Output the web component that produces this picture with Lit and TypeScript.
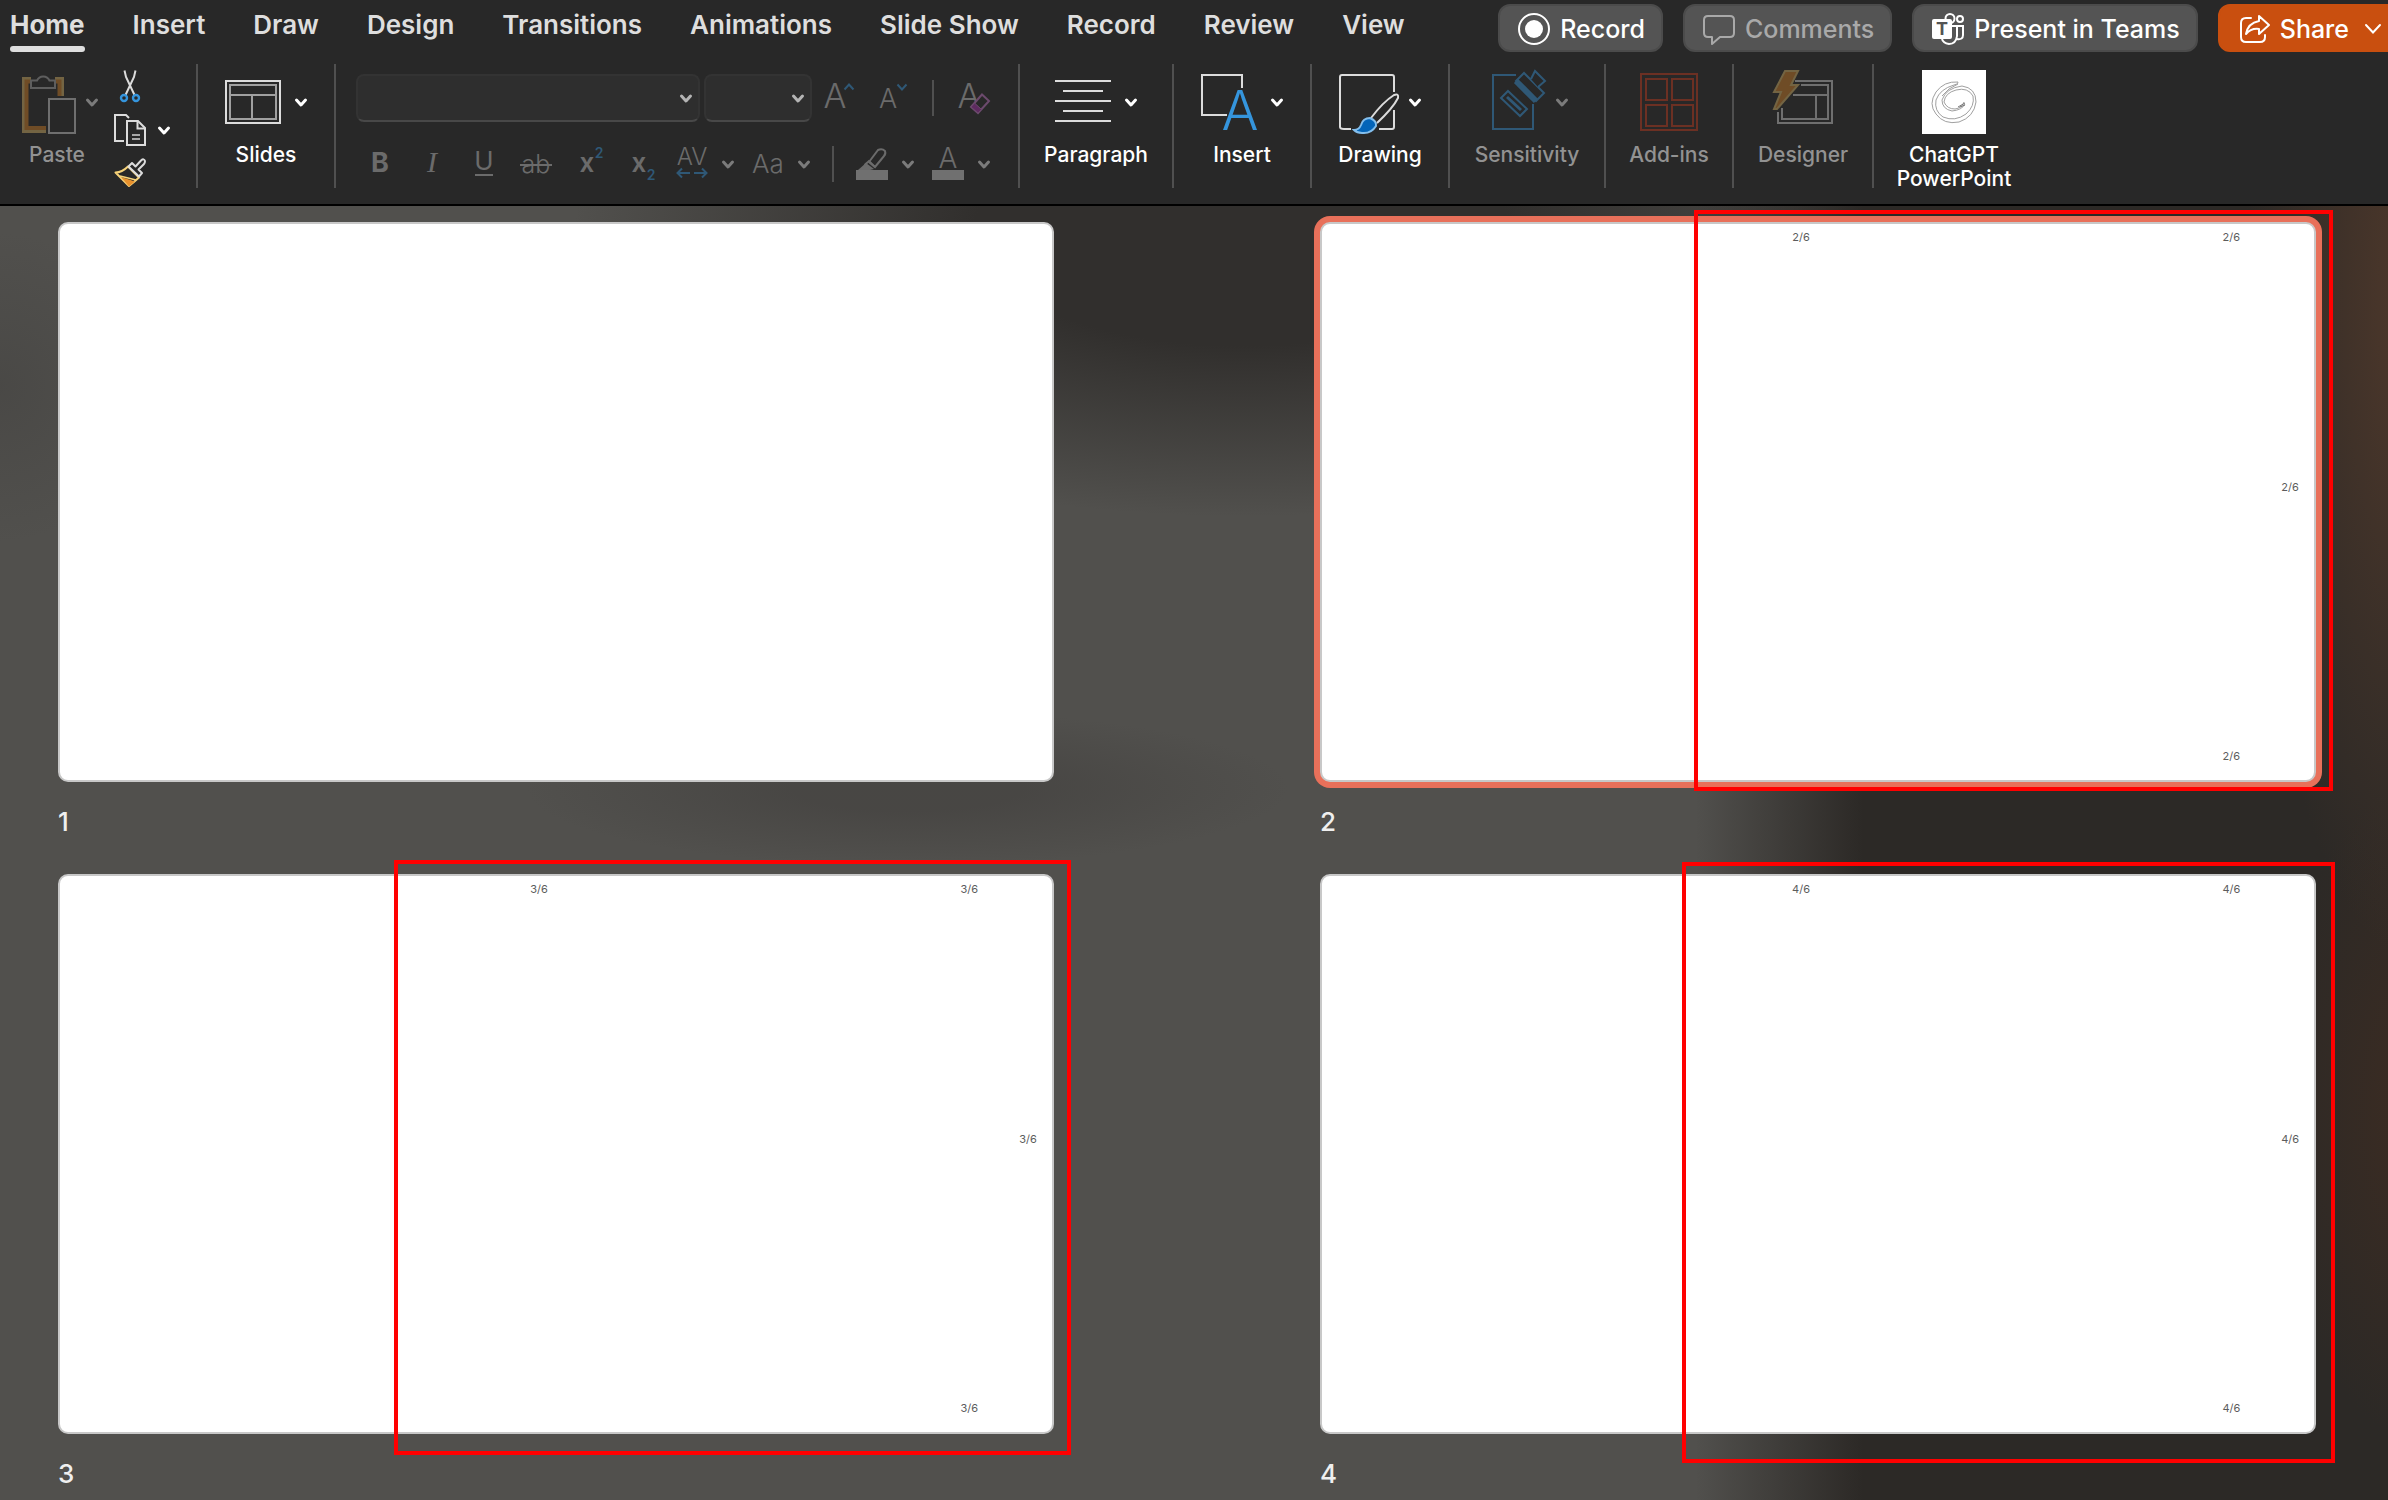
import { LitElement, html, css, svg, nothing, type TemplateResult } from "lit";
import { customElement, property, state } from "lit/decorators.js";
import { classMap } from "lit/directives/class-map.js";
import { styleMap } from "lit/directives/style-map.js";

const chevron = html`<svg class="chevron" viewBox="0 0 12 10" width="12" height="10" aria-hidden="true">
  <path d="M1.5 3 6 8 10.5 3" fill="none" stroke="currentColor" stroke-width="3" stroke-linecap="round" stroke-linejoin="round" />
</svg>`;

const icon = (w: number, h: number, body: TemplateResult) =>
  html`<svg class="icon" viewBox="0 0 ${w} ${h}" width=${w} height=${h} aria-hidden="true">${body}</svg>`;

const icons = {
  paste: icon(56, 64, svg`
    <path d="M15 10H9V60H30M39 10H45V30" fill="none" stroke="#736443" stroke-width="6" />
    <path d="M15 11.500H10.500V58H30M39 11.500H43.500V30" fill="none" stroke="#6f4c26" stroke-width="4" />
    <path d="M15 18V10.500H21A6.800 6.800 0 0 1 33.500 10.500H39V18Z" fill="#282828" stroke="#5e5e5e" stroke-width="2" />
    <rect x="30" y="26" width="32" height="38" fill="#282828" />
    <rect x="33" y="29" width="26" height="34" fill="#282828" stroke="#6f6f6f" stroke-width="2" />`),
  cut: icon(32, 32, svg`
    <path d="M10.500 0.500 12 7 20.500 25M21.500 0.500 20 7 11.500 25" fill="none" stroke="#dcdcdc" stroke-width="2" />
    <circle cx="10" cy="28" r="3" fill="none" stroke="#3595dd" stroke-width="2.400" />
    <circle cx="22" cy="28" r="3" fill="none" stroke="#3595dd" stroke-width="2.400" />`),
  copy: icon(32, 32, svg`
    <path d="M10 27H1V1H12L15 4" fill="none" stroke="#dcdcdc" stroke-width="2" />
    <path d="M13 7H24L31 14V31H13Z" fill="none" stroke="#dcdcdc" stroke-width="2" />
    <path d="M23.500 7V14.500H31" fill="none" stroke="#dcdcdc" stroke-width="2" />
    <path d="M18 21H26M18 25H26" stroke="#a8a8a8" stroke-width="2" />`),
  painter: icon(32, 32, svg`
    <path d="M1.500 14.500Q8 14.500 14 8.500L25 19.500Q20 24 15 28Z" fill="#282828" stroke="#f6d278" stroke-width="2" stroke-linejoin="round" />
    <path d="M7 19 21 23.500 15 28.500Z" fill="#e8912d" />
    <path d="M6 18Q14 20 22 22" fill="none" stroke="#f6d278" stroke-width="1.600" />
    <path d="M14.500 8.500 18 5 21.500 8.500 27 2.500Q30 0 31 3Q31 5 30 6L24.500 11.500 28 15 25 18.500Z" fill="#282828" stroke="#dcdcdc" stroke-width="2" stroke-linejoin="round" />`),
  slides: icon(56, 64, svg`
    <rect x="1" y="11" width="54" height="42" fill="none" stroke="#dcdcdc" stroke-width="2" />
    <path d="M5 15H51V49H5ZM5 25H51M27 25V49" fill="none" stroke="#a0a0a0" stroke-width="2" />`),
  paragraph: icon(56, 64, svg`
    <path d="M0 11H56M8 21H48M0 31H56M8 41H48M0 51H56" fill="none" stroke="#dcdcdc" stroke-width="2" />`),
  insert: icon(56, 64, svg`
    <path d="M26 45H1V5H41V18" fill="none" stroke="#dcdcdc" stroke-width="2" />
    <text class="thin" x="39" y="60" font-size="55" fill="#3595dd" text-anchor="middle">A</text>`),
  drawing: icon(56, 64, svg`
    <path d="M12 59H5Q1 59 1 57V7Q1 5 3 5H53Q55 5 55 7V22M55 40V57Q55 59 53 59H40" fill="none" stroke="#dcdcdc" stroke-width="2" />
    <path d="M32 48Q44 32 55 25Q60 23 59 28Q54 38 38 53" fill="#282828" stroke="#dcdcdc" stroke-width="2" />
    <path d="M15 60Q20 60 22 55Q24 48 31 48Q38 51 37 56Q32 64 23 63Q18 63 15 60Z" fill="#0364b8" stroke="#83beec" stroke-width="2" />`),
  sensitivity: icon(56, 64, svg`
    <path d="M30 5H7V59H47V34" fill="none" stroke="#2f5876" stroke-width="2" />
    <path d="M22 21 41 39 34 46 15 28Z" fill="#282828" stroke="#2f5876" stroke-width="2" />
    <path d="M21 27 35 40" stroke="#2f5876" stroke-width="3" />
    <path d="M30 11 38 3 58 23 50 31Z" fill="#282828" stroke="#2f5876" stroke-width="2" />
    <path d="M30 11 50 31" stroke="#2f5876" stroke-width="6" />
    <path d="M45 9 49 1 59 11 52 17" fill="#282828" stroke="#2f5876" stroke-width="2" />`),
  addins: icon(58, 64, svg`
    <path d="M1 4H57V60H1ZM6 9H27V30H6ZM32 9H53V30H32ZM6 35H27V56H6ZM32 35H53V56H32Z" fill="none" stroke="#6c3023" stroke-width="2" />`),
  designer: icon(60, 64, svg`
    <path d="M22 11H59V53H5V42" fill="none" stroke="#6f6f6f" stroke-width="2" />
    <path d="M28 15H55V49H9V38M20 25H55M43 25V49" fill="none" stroke="#6f6f6f" stroke-width="2" />
    <path d="M12 1H25L18 15H25L4 39H1L8 22H1Z" fill="#6f4c26" stroke="#736443" stroke-width="2" />`),
  chatgpt: icon(64, 64, svg`
    <rect width="64" height="64" fill="#fff" />
    <g fill="none" stroke="#a0a0a0" stroke-width="1">
      <path d="M36 12Q22 11 14 22Q6 34 14 44Q22 55 37 52Q52 47 54 32Q54 18 40 16Q24 18 20 30Q20 39 30 41Q40 40 43 34" />
      <path d="M36 12Q37 14 32 15Q18 19 14 30Q12 41 21 47Q33 52 44 44Q53 36 51 26Q46 17 34 20Q23 23 22 32Q25 39 33 39Q40 38 42 32" />
      <path d="M20 26Q26 18 36 14" />
      <path d="M36 37 43 33M38 37 43 35" stroke="#777" />
    </g>`),
  record: icon(32, 32, svg`
    <circle cx="16" cy="16" r="15" fill="none" stroke="#fff" stroke-width="2" />
    <circle cx="16" cy="16" r="9" fill="#fff" />`),
  comments: icon(32, 32, svg`
    <path d="M5 3H27Q31 3 31 7V20Q31 24 27 24H17L9 31V24H5Q1 24 1 20V7Q1 3 5 3Z" fill="none" stroke="#a9a9a9" stroke-width="2" stroke-linejoin="round" />`),
  teams: icon(32, 32, svg`
    <circle cx="18" cy="5.500" r="4.500" fill="none" stroke="#fff" stroke-width="2" />
    <circle cx="28" cy="6" r="3" fill="none" stroke="#fff" stroke-width="2" />
    <path d="M22 13H31V22Q31 27 25 26" fill="none" stroke="#fff" stroke-width="2" />
    <path d="M20 13H25V23Q24 31 17 31Q11 30 10 26" fill="none" stroke="#fff" stroke-width="2" />
    <rect x="0" y="6" width="20" height="20" rx="2" fill="#fff" />
    <text class="heavy" x="10" y="22" font-size="18" fill="#545454" text-anchor="middle">T</text>`),
  share: icon(32, 32, svg`
    <path d="M13 5H8Q3 5 3 10V24Q3 29 8 29H22Q27 29 27 24V22" fill="none" stroke="#fff" stroke-width="2" stroke-linecap="round" />
    <path d="M21 3 31 12 21 21V16Q13 15 8 21Q10 10 21 8Z" fill="none" stroke="#fff" stroke-width="2" stroke-linejoin="round" />`),
  grow: icon(32, 32, svg`
    <text class="thin" x="11" y="26" font-size="34" fill="#6b6b6b" text-anchor="middle">A</text>
    <path d="M20.500 7.500 25 2.500 29.500 7.500" fill="none" stroke="#2f5876" stroke-width="2" />`),
  shrink: icon(32, 32, svg`
    <text class="thin" x="12" y="26" font-size="27" fill="#6b6b6b" text-anchor="middle">A</text>
    <path d="M21.500 2.500 26 7.500 30.500 2.500" fill="none" stroke="#2f5876" stroke-width="2" />`),
  clear: icon(32, 32, svg`
    <text class="thin" x="11" y="26" font-size="34" fill="#6b6b6b" text-anchor="middle">A</text>
    <path d="M13 25 24 12.500 31 19 20 31Z" fill="#282828" stroke="#6c4a6d" stroke-width="2" />
    <path d="M13 25 16.500 21 23.500 27.500 20 31Z" fill="#5e2a60" stroke="#6c4a6d" stroke-width="1" />`),
  bold: icon(32, 32, svg`<text class="heavy" x="16" y="24" font-size="27" fill="#6b6b6b" text-anchor="middle">B</text>`),
  italic: icon(32, 32, svg`<text class="serif" x="16" y="24" font-size="30" fill="#6b6b6b" text-anchor="middle">I</text>`),
  underline: icon(32, 32, svg`
    <text class="plain" x="16" y="22" font-size="26" fill="#6b6b6b" text-anchor="middle">U</text>
    <path d="M7 27H25" stroke="#6b6b6b" stroke-width="2" />`),
  strike: icon(32, 32, svg`
    <text class="thin" x="16" y="25" font-size="25" fill="#6b6b6b" text-anchor="middle">ab</text>
    <path d="M0 17H32" stroke="#6b6b6b" stroke-width="2" />`),
  sup: icon(32, 32, svg`
    <text class="bold" x="15" y="24" font-size="26" fill="#6b6b6b" text-anchor="middle">x</text>
    <text class="bold" x="27" y="10" font-size="14" fill="#2f5876" text-anchor="middle">2</text>`),
  sub: icon(32, 32, svg`
    <text class="bold" x="15" y="24" font-size="26" fill="#6b6b6b" text-anchor="middle">x</text>
    <text class="bold" x="27" y="32" font-size="14" fill="#2f5876" text-anchor="middle">2</text>`),
  spacing: icon(32, 32, svg`
    <text class="thin" x="16" y="17" font-size="24" fill="#6b6b6b" text-anchor="middle">AV</text>
    <path d="M1 25H14M18 25H31M6 20.500 1.500 25 6 29.500M26 20.500 30.500 25 26 29.500" fill="none" stroke="#2f5876" stroke-width="2" />`),
  textCase: icon(32, 32, svg`<text class="thin" x="16" y="25" font-size="26" fill="#6b6b6b" text-anchor="middle">Aa</text>`),
  highlight: icon(32, 32, svg`
    <path d="M13 14 22 2Q26 0 29 3Q30 6 28 8L19 19Z" fill="none" stroke="#6b6b6b" stroke-width="2" />
    <path d="M10 15 18 21 14 22H2Z" fill="#6b6b6b" />
    <path d="M8.500 17 13 13 19 19" fill="none" stroke="#6b6b6b" stroke-width="2" />
    <rect y="22" width="32" height="10" fill="#707070" />`),
  fontColor: icon(32, 32, svg`
    <text class="thin" x="16" y="20" font-size="28" fill="#6b6b6b" text-anchor="middle">A</text>
    <rect y="22" width="32" height="10" fill="#707070" />`),
};

const baseStyles = css`
  * { box-sizing: border-box; }
  button, select {
    font: inherit;
    color: inherit;
    background: none;
    border: 0;
    margin: 0;
    padding: 0;
  }
  svg { display: block; overflow: visible; flex: none; }
  svg text { font-family: Inter, Roboto, sans-serif; }
  svg .thin { font-weight: 300; }
  svg .plain { font-weight: 400; }
  svg .bold { font-weight: 600; }
  svg .heavy { font-weight: 700; }
  svg .serif { font-family: "Liberation Serif", serif; font-style: italic; }
`;

@customElement("ribbon-tabs")
class RibbonTabs extends LitElement {
  @state() private active = "Home";
  private tabs = ["Home", "Insert", "Draw", "Design", "Transitions", "Animations", "Slide Show", "Record", "Review", "View"];

  static styles = [baseStyles, css`
    :host { display: flex; justify-content: space-between; align-items: flex-start; overflow: hidden; height: 56px; }
    .tabs { display: flex; gap: 48px; padding: 9px 0 0 10px; }
    .tab {
      display: flex;
      flex-direction: column;
      gap: 5px;
      font-size: 26px;
      line-height: 32px;
      font-weight: 600;
      color: #dedede;
      white-space: nowrap;
    }
    .tab.active { font-weight: 700; }
    .bar { height: 6px; border-radius: 3px; }
    .active .bar { background: #dedede; }
    .actions { display: flex; gap: 20px; padding-top: 4px; margin-right: -11px; }
    .action {
      display: flex;
      align-items: center;
      gap: 10px;
      height: 48px;
      padding: 1px 16px 0 18px;
      border: 2px solid #4b4b4b;
      border-radius: 12px;
      background: #545454;
      color: #fff;
      font-size: 25px;
      font-weight: 500;
      white-space: nowrap;
    }
    .action:disabled { color: #a9a9a9; }
    .share { background: #c94f0f; border-color: #c94f0f; }
    .more { margin-left: 6px; }
  `];

  render() {
    return html`
      <div class="tabs" role="tablist">
        ${this.tabs.map((t) => html`
          <button class=${classMap({ tab: true, active: t === this.active })} role="tab"
            aria-selected=${t === this.active} @click=${() => (this.active = t)}>
            <span>${t}</span><span class="bar"></span>
          </button>`)}
      </div>
      <div class="actions">
        <button class="action">${icons.record}<span>Record</span></button>
        <button class="action" disabled>${icons.comments}<span>Comments</span></button>
        <button class="action">${icons.teams}<span>Present in Teams</span></button>
        <button class="action share">${icons.share}<span>Share</span>
          <svg class="more" viewBox="0 0 16 10" width="16" height="10" aria-hidden="true">
            <path d="M1 1 8 8.500 15 1" fill="none" stroke="#fff" stroke-width="2" stroke-linecap="round" />
          </svg>
        </button>
      </div>`;
  }
}

@customElement("ribbon-tools")
class RibbonTools extends LitElement {
  static styles = [baseStyles, css`
    :host {
      display: grid;
      grid-template-columns: 198px 138px 684px 154px 138px 138px 156px 128px 140px 160px;
      padding: 8px 0 16px;
      overflow: hidden;
    }
    .group {
      display: flex;
      justify-content: center;
      align-items: flex-start;
      height: 124px;
      padding-top: 6px;
      border-right: 2px solid #505050;
    }
    .group:last-child { border-right: 0; }
    .clipboard { justify-content: flex-start; gap: 16px; padding-left: 16px; }
    .big {
      display: flex;
      flex-direction: column;
      align-items: center;
      gap: 9px;
      color: #fff;
      font-size: 21px;
      line-height: 24px;
      font-weight: 500;
      white-space: nowrap;
    }
    .big:disabled { color: #929292; }
    .clipboard .big { width: 82px; }
    .face, .small { display: flex; align-items: center; gap: 14px; }
    .big:disabled .chevron, .small:disabled .chevron { color: #7b7b7b; }
    .small { height: 32px; color: #fff; }
    .stack { display: flex; flex-direction: column; gap: 12px; }
    .stack .small { gap: 12px; }
    .font { flex-direction: column; align-items: stretch; justify-content: flex-start; gap: 24px; padding: 10px 0 0 20px; }
    .row { display: flex; align-items: center; }
    .letters { gap: 18px; padding-left: 8px; }
    .styles { display: flex; gap: 20px; }
    .sizing { display: flex; align-items: center; gap: 20px; padding-left: 12px; }
    .rule { width: 2px; height: 36px; margin: 0 4px; background: #505050; }
    .combo { display: grid; align-items: center; margin-right: 4px; }
    .combo:nth-child(2) { margin-right: 0; }
    .combo select, .combo .chevron { grid-area: 1 / 1; }
    .combo .chevron { justify-self: end; margin-right: 8px; color: #b4b4b4; pointer-events: none; }
    select {
      appearance: none;
      width: 344px;
      height: 48px;
      border: 2px solid #333;
      border-bottom-color: #484848;
      border-radius: 8px;
      background: #2e2e2e;
      opacity: 1;
    }
    .size select { width: 108px; }
  `];

  private big(label: string | TemplateResult, face: TemplateResult, menu = true, disabled = false) {
    return html`<button class="big" ?disabled=${disabled}>
      <span class="face">${face}${menu ? chevron : nothing}</span><span>${label}</span>
    </button>`;
  }

  private small(label: string, face: TemplateResult, menu = false, disabled = true) {
    return html`<button class="small" aria-label=${label} ?disabled=${disabled}>${face}${menu ? chevron : nothing}</button>`;
  }

  render() {
    return html`
      <div class="group clipboard">
        ${this.big("Paste", icons.paste, true, true)}
        <div class="stack">
          ${this.small("Cut", icons.cut, false, false)}
          ${this.small("Copy", icons.copy, true, false)}
          ${this.small("Format Painter", icons.painter, false, false)}
        </div>
      </div>
      <div class="group">${this.big("Slides", icons.slides)}</div>
      <div class="group font">
        <div class="row">
          <label class="combo"><select aria-label="Font" disabled></select>${chevron}</label>
          <label class="combo size"><select aria-label="Font size" disabled></select>${chevron}</label>
          <div class="sizing">
            ${this.small("Increase font size", icons.grow)}
            ${this.small("Decrease font size", icons.shrink)}
            <span class="rule"></span>
            ${this.small("Clear formatting", icons.clear)}
          </div>
        </div>
        <div class="row letters">
          <div class="styles">
            ${this.small("Bold", icons.bold)} ${this.small("Italic", icons.italic)}
            ${this.small("Underline", icons.underline)} ${this.small("Strikethrough", icons.strike)}
            ${this.small("Superscript", icons.sup)} ${this.small("Subscript", icons.sub)}
            ${this.small("Character spacing", icons.spacing, true)}
          </div>
          ${this.small("Change case", icons.textCase, true)}
          <span class="rule"></span>
          ${this.small("Highlight colour", icons.highlight, true)}
          ${this.small("Font colour", icons.fontColor, true)}
        </div>
      </div>
      <div class="group">${this.big("Paragraph", icons.paragraph)}</div>
      <div class="group">${this.big("Insert", icons.insert)}</div>
      <div class="group">${this.big("Drawing", icons.drawing)}</div>
      <div class="group">${this.big("Sensitivity", icons.sensitivity, true, true)}</div>
      <div class="group">${this.big("Add-ins", icons.addins, false, true)}</div>
      <div class="group">${this.big("Designer", icons.designer, false, true)}</div>
      <div class="group">${this.big(html`ChatGPT<br />PowerPoint`, icons.chatgpt, false)}</div>`;
  }
}

interface Mark { left: string; top: string; right: string; bottom: string; }
interface Slide { n: number; numbered: boolean; selected?: boolean; mark?: Mark; }

/* Centres of the page-number fields, as shares of the slide's width and height. */
const fields = [
  { left: "48.3%", top: "2.7%" },
  { left: "91.5%", top: "2.7%" },
  { left: "97.4%", top: "47.4%" },
  { left: "91.5%", top: "95.4%" },
];

@customElement("slide-thumb")
class SlideThumb extends LitElement {
  @property({ attribute: false }) slide!: Slide;
  @property({ type: Number }) total = 6;

  static styles = [baseStyles, css`
    :host { display: block; min-width: 0; }
    .figure { margin: 0; }
    .canvas { position: relative; aspect-ratio: 249 / 140; }
    .face { height: 100%; background: #fff; border: 2px solid #c8c8c8; border-radius: 10px; }
    .selected .face { box-shadow: 0 0 0 6px #e8705a; }
    .field {
      position: absolute;
      transform: translate(-50%, -50%);
      font-size: 11px;
      line-height: 14px;
      color: #5c5c5c;
    }
    .mark { position: absolute; border: 4px solid #f00; }
    .caption { margin-top: 24px; font-size: 26px; line-height: 32px; font-weight: 500; color: #efefef; }
  `];

  render() {
    const { n, numbered, selected, mark } = this.slide;
    return html`
      <figure class="figure">
        <div class=${classMap({ canvas: true, selected: !!selected })}>
          <div class="face"></div>
          ${numbered ? fields.map((f) => html`<span class="field" style=${styleMap(f)}>${n}/${this.total}</span>`) : nothing}
          ${mark ? html`<div class="mark" style=${styleMap({ ...mark })}></div>` : nothing}
        </div>
        <figcaption class="caption">${n}</figcaption>
      </figure>`;
  }
}

@customElement("app-root")
class AppRoot extends LitElement {
  private slides: Slide[] = [
    { n: 1, numbered: false },
    { n: 2, numbered: true, selected: true, mark: { left: "37.55%", top: "-12px", right: "-17px", bottom: "-9px" } },
    { n: 3, numbered: true, mark: { left: "33.75%", top: "-14px", right: "-17px", bottom: "-21px" } },
    { n: 4, numbered: true, mark: { left: "36.35%", top: "-12px", right: "-19px", bottom: "-29px" } },
  ];

  static styles = [baseStyles, css`
    :host {
      display: flex;
      flex-direction: column;
      min-height: 100vh;
      font-family: Inter, Roboto, "Liberation Sans", sans-serif;
      background: #51504d;
    }
    .ribbon { background: #282828; border-bottom: 2px solid #000; }
    .sorter {
      flex: 1;
      display: grid;
      grid-template-columns: 1fr 1fr;
      align-content: start;
      gap: 36px 266px;
      padding: 16px 72px 0 58px;
      background:
        radial-gradient(ellipse 7% 50% at 101% 8%, rgba(78, 56, 43, 1), rgba(78, 56, 43, 0)),
        radial-gradient(ellipse 7% 26% at 102% 70%, rgba(66, 45, 33, 0.8), rgba(66, 45, 33, 0)),
        linear-gradient(to right, rgba(44, 41, 38, 0) 71%, #2c2926 78%),
        radial-gradient(ellipse 28% 22% at 52% 2%, #312f2d 40%, rgba(49, 47, 45, 0)),
        radial-gradient(ellipse 16% 6% at 38% 45%, rgba(66, 64, 62, 0.6) 30%, rgba(66, 64, 62, 0)),
        radial-gradient(ellipse 6% 12% at 0% 14%, rgba(66, 65, 63, 0.5), rgba(66, 65, 63, 0)),
        #51504d;
    }
  `];

  render() {
    return html`
      <header class="ribbon">
        <ribbon-tabs></ribbon-tabs>
        <ribbon-tools></ribbon-tools>
      </header>
      <main class="sorter">
        ${this.slides.map((s) => html`<slide-thumb .slide=${s}></slide-thumb>`)}
      </main>`;
  }
}
